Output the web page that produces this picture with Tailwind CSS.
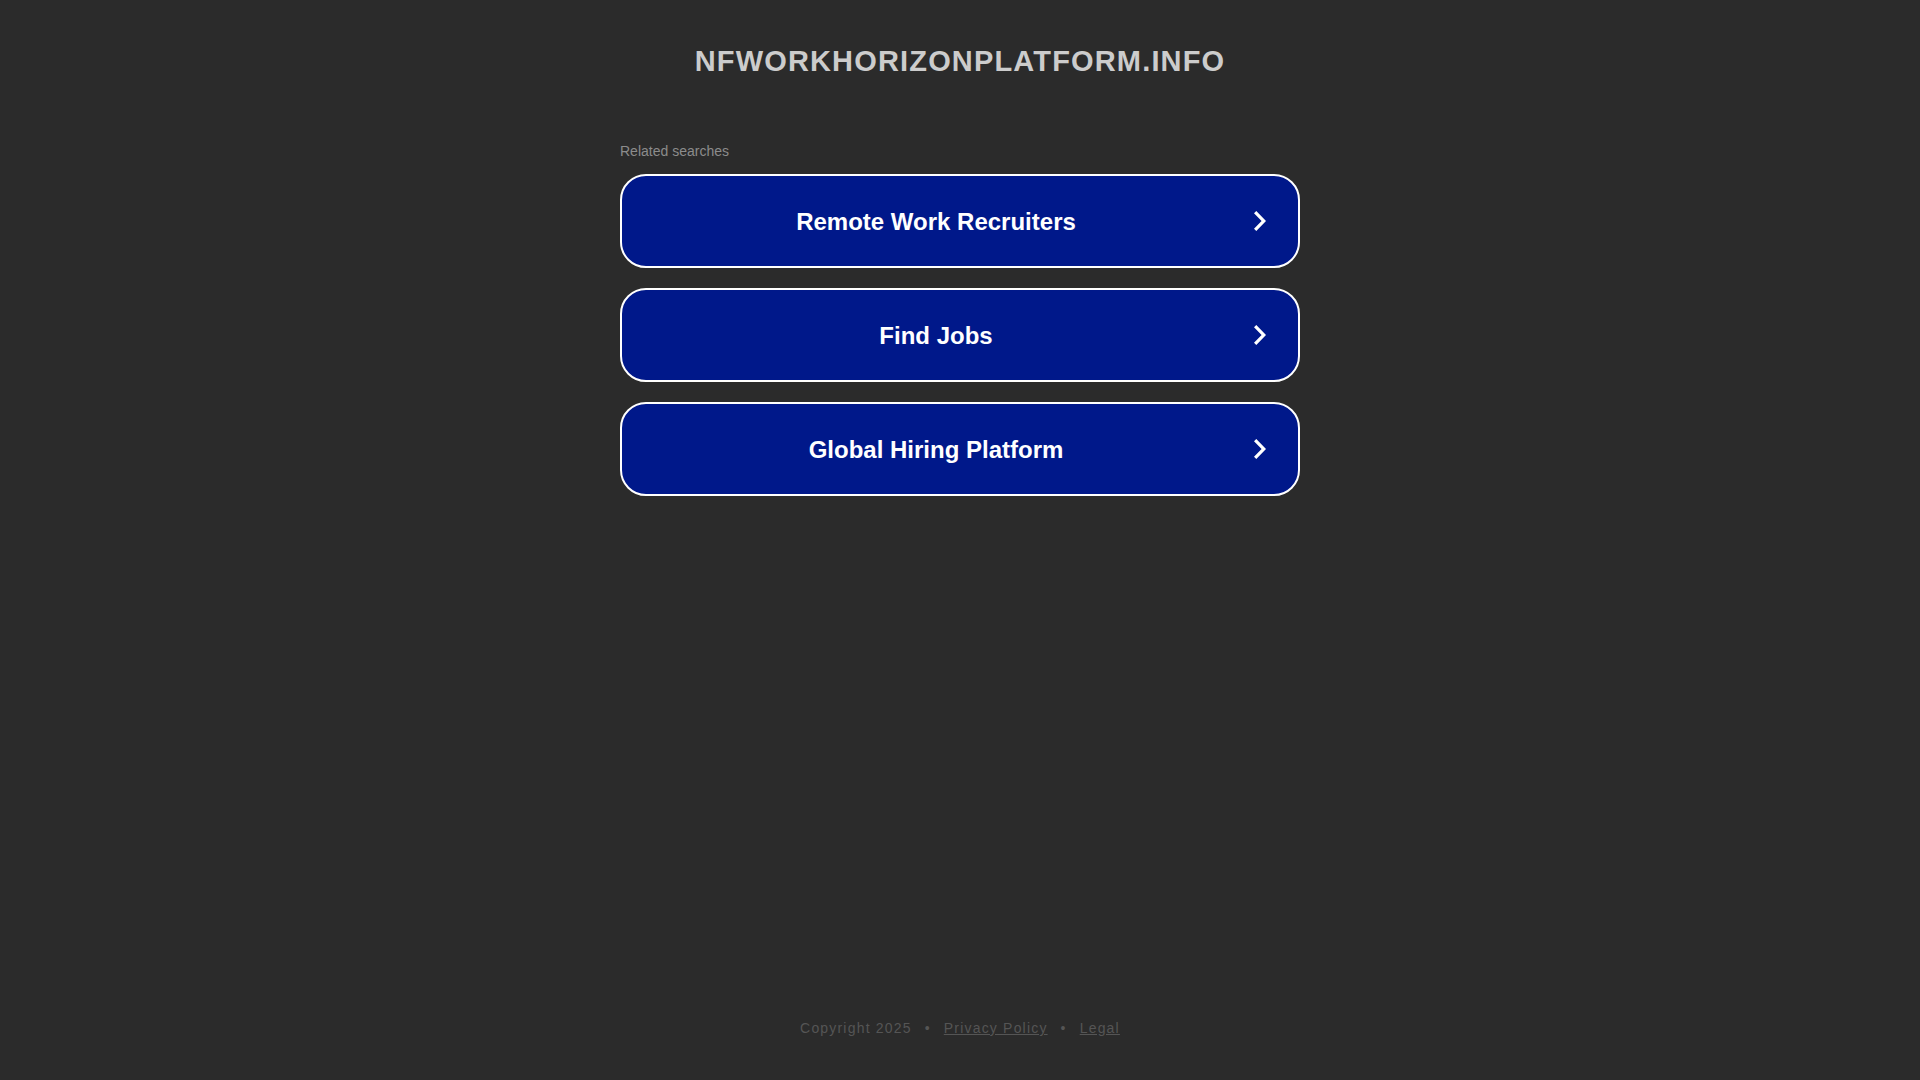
<!DOCTYPE html>
<html lang="en">
<head>
<meta charset="utf-8">
<meta name="viewport" content="width=device-width, initial-scale=1">
<title>nfworkhorizonplatform.info</title>
<script src="https://cdn.jsdelivr.net/npm/@tailwindcss/browser@4"></script>
</head>
<body class="flex min-h-screen flex-col bg-[#2b2b2b] font-['Liberation_Sans',Arial,sans-serif]">
<header class="px-4 pt-11 text-center">
<h1 class="text-[29px] leading-[34px] font-bold tracking-[0.04em] text-[#cccccc] uppercase">nfworkhorizonplatform.info</h1>
</header>
<main class="mx-auto w-full max-w-[680px] grow pt-[62px]">
<h2 class="mb-3 pt-px text-sm leading-[21px] text-[#8c8c8c]">Related searches</h2>
<nav class="flex flex-col gap-5">
<a href="#" class="flex h-[94px] items-center rounded-[26px] border-2 border-white bg-[#00188a] pr-8 text-2xl font-bold text-white">
<span class="grow pt-0.5 pr-1 text-center">Remote Work Recruiters</span>
<svg class="h-5 w-3 shrink-0" viewBox="0 0 12 20" fill="currentColor" aria-hidden="true"><path d="M2.3 0 0 2.3 7.6 10 0 17.7 2.3 20 12 10z"/></svg>
</a>
<a href="#" class="flex h-[94px] items-center rounded-[26px] border-2 border-white bg-[#00188a] pr-8 text-2xl font-bold text-white">
<span class="grow pt-0.5 pr-1 text-center">Find Jobs</span>
<svg class="h-5 w-3 shrink-0" viewBox="0 0 12 20" fill="currentColor" aria-hidden="true"><path d="M2.3 0 0 2.3 7.6 10 0 17.7 2.3 20 12 10z"/></svg>
</a>
<a href="#" class="flex h-[94px] items-center rounded-[26px] border-2 border-white bg-[#00188a] pr-8 text-2xl font-bold text-white">
<span class="grow pt-0.5 pr-1 text-center">Global Hiring Platform</span>
<svg class="h-5 w-3 shrink-0" viewBox="0 0 12 20" fill="currentColor" aria-hidden="true"><path d="M2.3 0 0 2.3 7.6 10 0 17.7 2.3 20 12 10z"/></svg>
</a>
</nav>
</main>
<footer class="flex justify-center gap-[13px] pt-16 pb-[42px] text-sm tracking-[0.085em] text-[#555555]">
<span>Copyright 2025</span>
<span>•</span>
<a href="#" class="underline">Privacy Policy</a>
<span>•</span>
<a href="#" class="underline">Legal</a>
</footer>
</body>
</html>
